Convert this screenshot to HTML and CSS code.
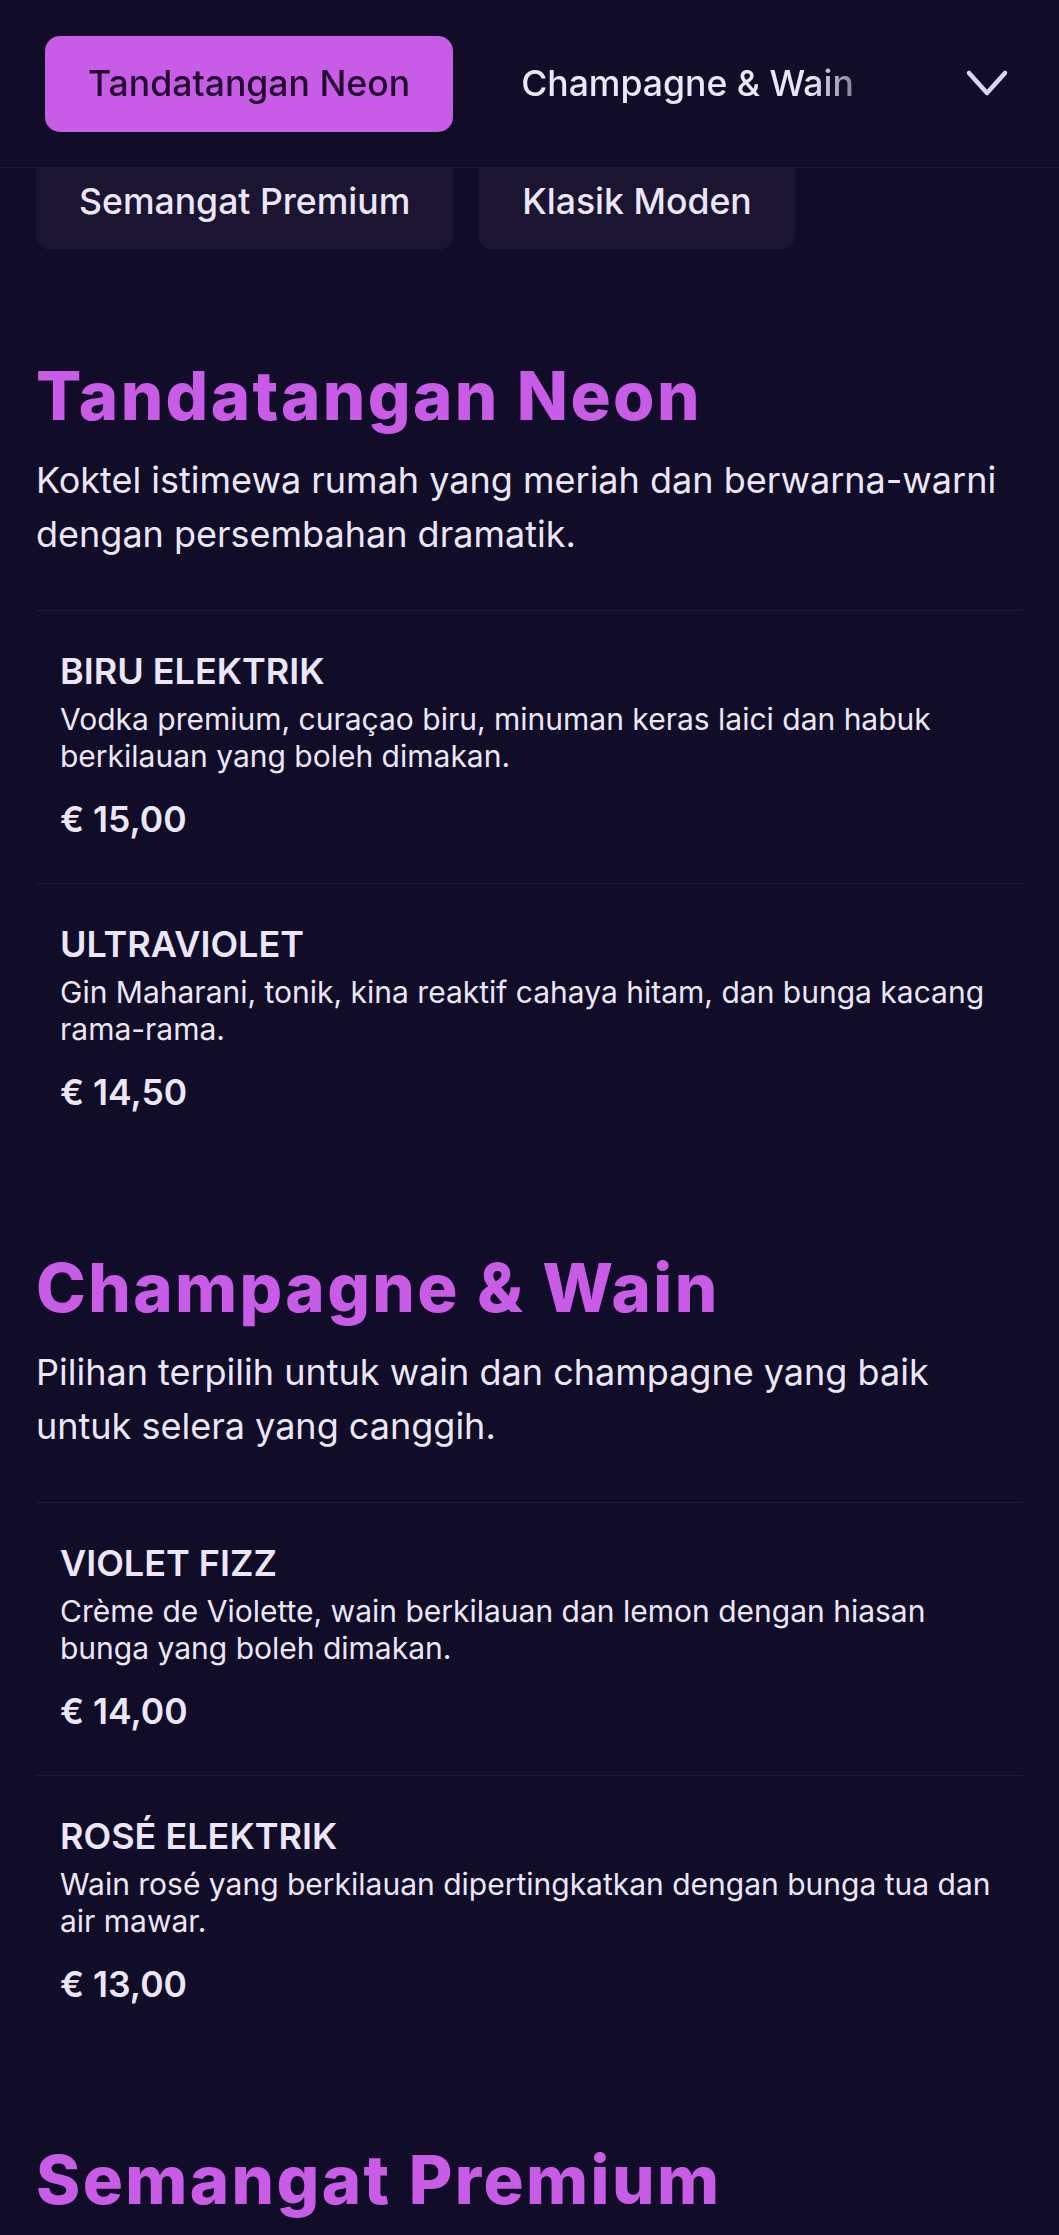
FILE: index.html
```html
<!DOCTYPE html>
<html lang="ms">
<head>
<meta charset="utf-8">
<title>Menu Koktel</title>
<link rel="stylesheet" href="styles.css">
</head>
<body>
<header class="topbar">
  <nav class="tabs-scroll">
    <a class="tab tab-active" href="#neon">Tandatangan Neon</a>
    <a class="tab" href="#wain">Champagne &amp; Wain</a>
    <a class="tab" href="#premium">Semangat Premium</a>
  </nav>
  <button class="toggle" aria-label="Tunjuk semua kategori">
    <svg width="44" height="30" viewBox="0 0 44 30"><polyline points="4,4 22,24 40,4" fill="none" stroke="#ddd4f4" stroke-width="4.5" stroke-linecap="round" stroke-linejoin="round"/></svg>
  </button>
</header>
<div class="tabs-more">
  <a class="tab tab-card" href="#premium">Semangat Premium</a>
  <a class="tab tab-card" href="#klasik">Klasik Moden</a>
</div>

<main class="menu">
  <section class="category" id="neon">
    <h2 class="cat-title">Tandatangan Neon</h2>
    <p class="cat-desc">Koktel istimewa rumah yang meriah dan berwarna-warni dengan persembahan dramatik.</p>
    <ul class="items">
      <li class="item">
        <h3 class="item-name">BIRU ELEKTRIK</h3>
        <p class="item-desc">Vodka premium, curaçao biru, minuman keras laici dan habuk berkilauan yang boleh dimakan.</p>
        <p class="item-price">€ 15,00</p>
      </li>
      <li class="item">
        <h3 class="item-name">ULTRAVIOLET</h3>
        <p class="item-desc">Gin Maharani, tonik, kina reaktif cahaya hitam, dan bunga kacang rama-rama.</p>
        <p class="item-price">€ 14,50</p>
      </li>
    </ul>
  </section>

  <section class="category" id="wain">
    <h2 class="cat-title">Champagne &amp; Wain</h2>
    <p class="cat-desc">Pilihan terpilih untuk wain dan champagne yang baik untuk selera yang canggih.</p>
    <ul class="items">
      <li class="item">
        <h3 class="item-name">VIOLET FIZZ</h3>
        <p class="item-desc">Crème de Violette, wain berkilauan dan lemon dengan hiasan bunga yang boleh dimakan.</p>
        <p class="item-price">€ 14,00</p>
      </li>
      <li class="item">
        <h3 class="item-name">ROSÉ ELEKTRIK</h3>
        <p class="item-desc">Wain rosé yang berkilauan dipertingkatkan dengan bunga tua dan air mawar.</p>
        <p class="item-price">€ 13,00</p>
      </li>
    </ul>
  </section>

  <section class="category" id="premium">
    <h2 class="cat-title">Semangat Premium</h2>
    <p class="cat-desc">Minuman keras premium pilihan untuk dinikmati begitu sahaja atau dengan ais.</p>
  </section>
</main>
</body>
</html>
```

FILE: styles.css
```css
* {
  box-sizing: border-box;
}

html, body {
  margin: 0;
  padding: 0;
  background: #110d28;
}

body {
  font-family: Inter, "Noto Sans", sans-serif;
  color: #ece6fa;
  overflow: hidden;
}

a {
  text-decoration: none;
  color: inherit;
}

/* ---------- top bar ---------- */
.topbar {
  height: 168px;
  display: flex;
  align-items: center;
  border-bottom: 1px solid #1c1834;
  background: #110d28;
}

.tabs-scroll {
  flex: 0 0 925px;
  display: flex;
  align-items: center;
  gap: 25px;
  padding-left: 45px;
  overflow: hidden;
  -webkit-mask-image: linear-gradient(to right, #000 0, #000 810px, transparent 905px);
  mask-image: linear-gradient(to right, #000 0, #000 810px, transparent 905px);
}

.tab {
  flex: 0 0 auto;
  display: block;
  font-size: 35.6px;
  font-weight: 500;
  line-height: 96px;
  height: 96px;
  padding: 0 43px;
  border-radius: 15px;
  white-space: nowrap;
  color: #ece6fa;
}

.tab-active {
  background: #c85ce6;
  color: #22092f;
}

.toggle {
  flex: 1;
  height: 168px;
  display: flex;
  align-items: center;
  justify-content: flex-start;
  padding: 0 0 0 40px;
  border: 0;
  background: transparent;
}

.toggle svg {
  display: block;
}

.tabs-more {
  display: flex;
  gap: 26px;
  padding-left: 36px;
}

.tab-card {
  height: 82px;
  line-height: 68px;
  background: #1b1532;
  border-radius: 0 0 15px 15px;
}

/* ---------- menu ---------- */
.menu {
  padding: 14px 36px 0;
}

.category {
  padding-top: 92px;
}

.cat-title {
  margin: 0;
  font-family: Inter, "Noto Sans", sans-serif;
  font-weight: 800;
  font-size: 67px;
  line-height: 80px;
  letter-spacing: 2.4px;
  color: #c85ce6;
}

.cat-desc {
  margin: 17px 0 0;
  font-size: 36px;
  line-height: 54px;
  font-weight: 400;
  color: #ece6fa;
}

.items {
  list-style: none;
  margin: 49px 0 0;
  padding: 0;
}

.item {
  border-top: 1px solid #1d1936;
  padding: 38px 24px 41px;
}

.item-name {
  margin: 0;
  font-size: 36px;
  line-height: 44px;
  font-weight: 600;
  color: #ece6fa;
}

.item-desc {
  margin: 8px 0 0;
  font-size: 30px;
  line-height: 36.5px;
  font-weight: 400;
  color: #ece6fa;
}

.item-price {
  margin: 24px 0 0;
  font-size: 35.5px;
  line-height: 44px;
  font-weight: 600;
  color: #ece6fa;
}
```
